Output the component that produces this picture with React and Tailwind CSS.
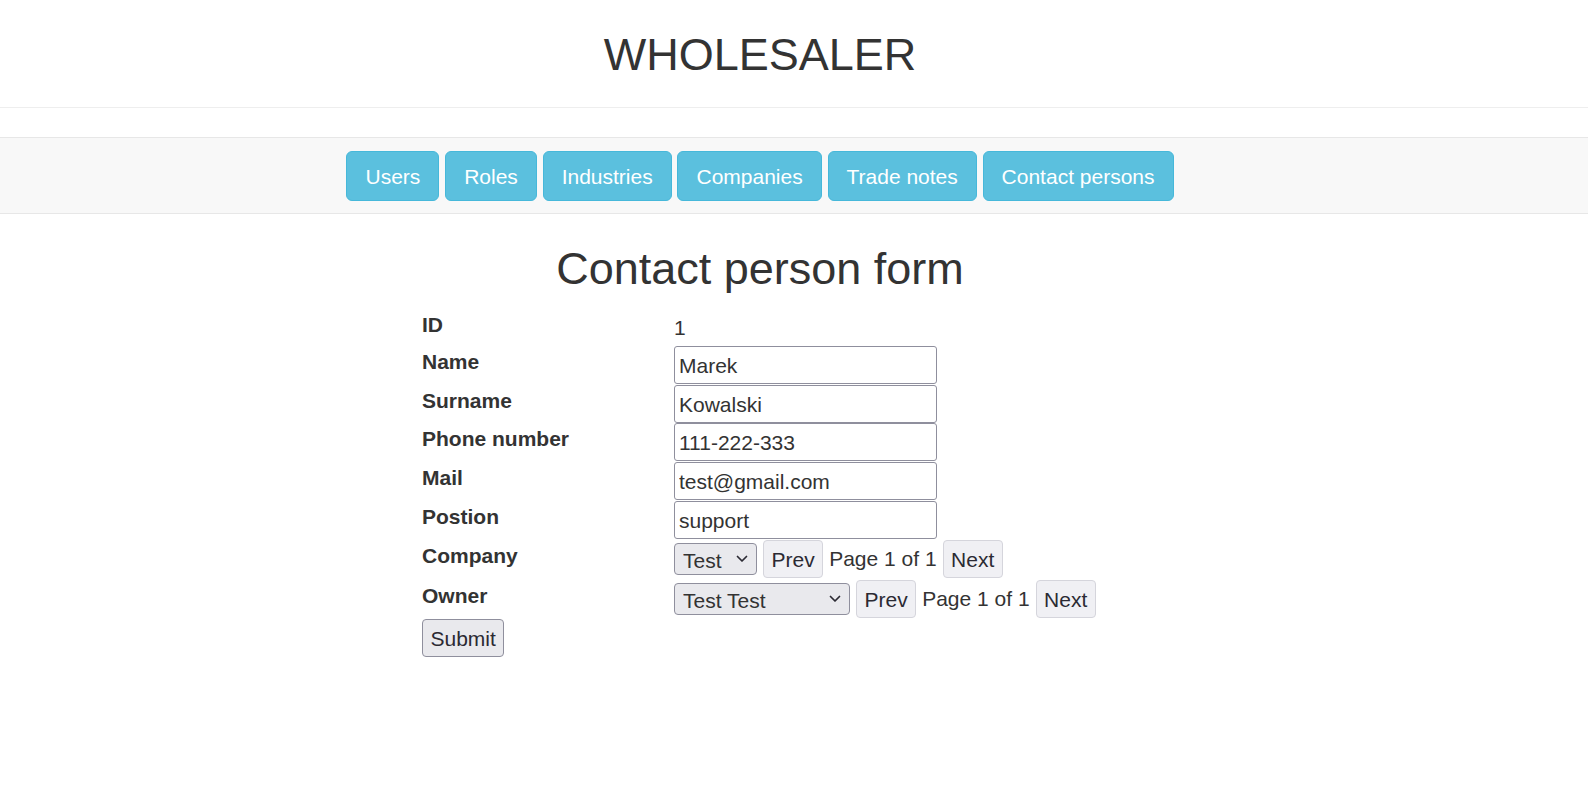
import React, { useState } from 'react';

const NAV_ITEMS = ['Users', 'Roles', 'Industries', 'Companies', 'Trade notes', 'Contact persons'];

const Chevron = () => (
    <svg width="12" height="8" viewBox="0 0 12 8" fill="none" className="pointer-events-none absolute right-[9px] top-1/2 -translate-y-1/2">
        <path d="M1.5 1.5 L6 6 L10.5 1.5" stroke="#2b2a33" strokeWidth="1.7" strokeLinecap="round" strokeLinejoin="round" />
    </svg>
);

const Picker = ({ value, options, width }) => (
    <div className={`relative ${width} h-[32.5px]`}>
        <select
            defaultValue={value}
            className="appearance-none w-full h-full bg-[#e9e9ed] border border-[#8f8f9d] rounded-[4px] pl-[8px] pr-[24px] pt-[1px] text-[21px] text-[#333] outline-none"
        >
            {options.map((o) => (
                <option key={o}>{o}</option>
            ))}
        </select>
        <Chevron />
    </div>
);

const PageButton = ({ children }) => (
    <button className="h-[38.5px] px-[7.5px] pt-[1px] bg-[#f0f0f4] border border-[#d5d5dc] rounded-[4px] text-[21px] text-[#2b2a33]">
        {children}
    </button>
);

const Pager = ({ value, options, width }) => (
    <div className="flex items-center gap-[6px]">
        <Picker value={value} options={options} width={width} />
        <PageButton>Prev</PageButton>
        <span className="leading-[30px] pt-[1px]">Page 1 of 1</span>
        <PageButton>Next</PageButton>
    </div>
);

const Row = ({ label, height, children }) => (
    <div className={`flex items-start ${height}`}>
        <label className="w-[252px] shrink-0 pt-[1px] font-bold leading-[30px]">{label}</label>
        <div>{children}</div>
    </div>
);

export default function App() {
    const [form, setForm] = useState({
        name: 'Marek',
        surname: 'Kowalski',
        phone: '111-222-333',
        mail: 'test@gmail.com',
        position: 'support',
    });

    const fields = [
        ['Name', 'name'],
        ['Surname', 'surname'],
        ['Phone number', 'phone'],
        ['Mail', 'mail'],
        ['Postion', 'position'],
    ];

    return (
        <div className="min-h-screen bg-white text-[#333] text-[21px] font-['Liberation_Sans',Arial,sans-serif]">
            {/* Header */}
            <header className="h-[108px] border-b border-[#eee] pt-[29.7px] pr-[68px]">
                <h2 className="text-[45px] leading-[49.5px] text-center">WHOLESALER</h2>
            </header>

            {/* Navigation */}
            <nav className="mt-[29px] bg-[#f8f8f8] border-y border-[#e7e7e7] pt-[13px] pb-[11.5px]">
                <div className="flex justify-center gap-[5.8px] pr-[68px]">
                    {NAV_ITEMS.map((item) => (
                        <button
                            key={item}
                            className="h-[50px] px-[18px] pt-[1px] bg-[#5bc0de] border border-[#46b8da] rounded-[6px] text-white text-[21px]"
                        >
                            {item}
                        </button>
                    ))}
                </div>
            </nav>

            <main className="pr-[68px]">
                <h2 className="mt-[30.3px] text-[45px] leading-[49.5px] text-center">Contact person form</h2>

                <div className="flex justify-center mt-[15.5px]">
                    <form className="w-[676px]" onSubmit={(e) => e.preventDefault()}>
                        <Row label="ID" height="h-[37.3px]">
                            <span className="block pt-[4px] leading-[30px]">1</span>
                        </Row>

                        {fields.map(([label, key]) => (
                            <Row key={key} label={label} height="h-[38.7px]">
                                <input
                                    value={form[key]}
                                    onChange={(e) => setForm({ ...form, [key]: e.target.value })}
                                    className="block w-[263px] h-[38px] px-[4px] pt-[2px] border border-[#8f8f9d] rounded-[3px] text-[21px] text-[#333] outline-none"
                                />
                            </Row>
                        ))}

                        <Row label="Company" height="h-[40px]">
                            <Pager value="Test" options={['Test']} width="w-[83px]" />
                        </Row>

                        <Row label="Owner" height="h-[39.5px]">
                            <Pager value="Test Test" options={['Test Test']} width="w-[176px]" />
                        </Row>

                        <button
                            type="submit"
                            className="h-[38.3px] px-[7.5px] pt-[1px] bg-[#e9e9ed] border border-[#8f8f9d] rounded-[4px] text-[21px] text-[#2b2a33]"
                        >
                            Submit
                        </button>
                    </form>
                </div>
            </main>
        </div>
    );
}
